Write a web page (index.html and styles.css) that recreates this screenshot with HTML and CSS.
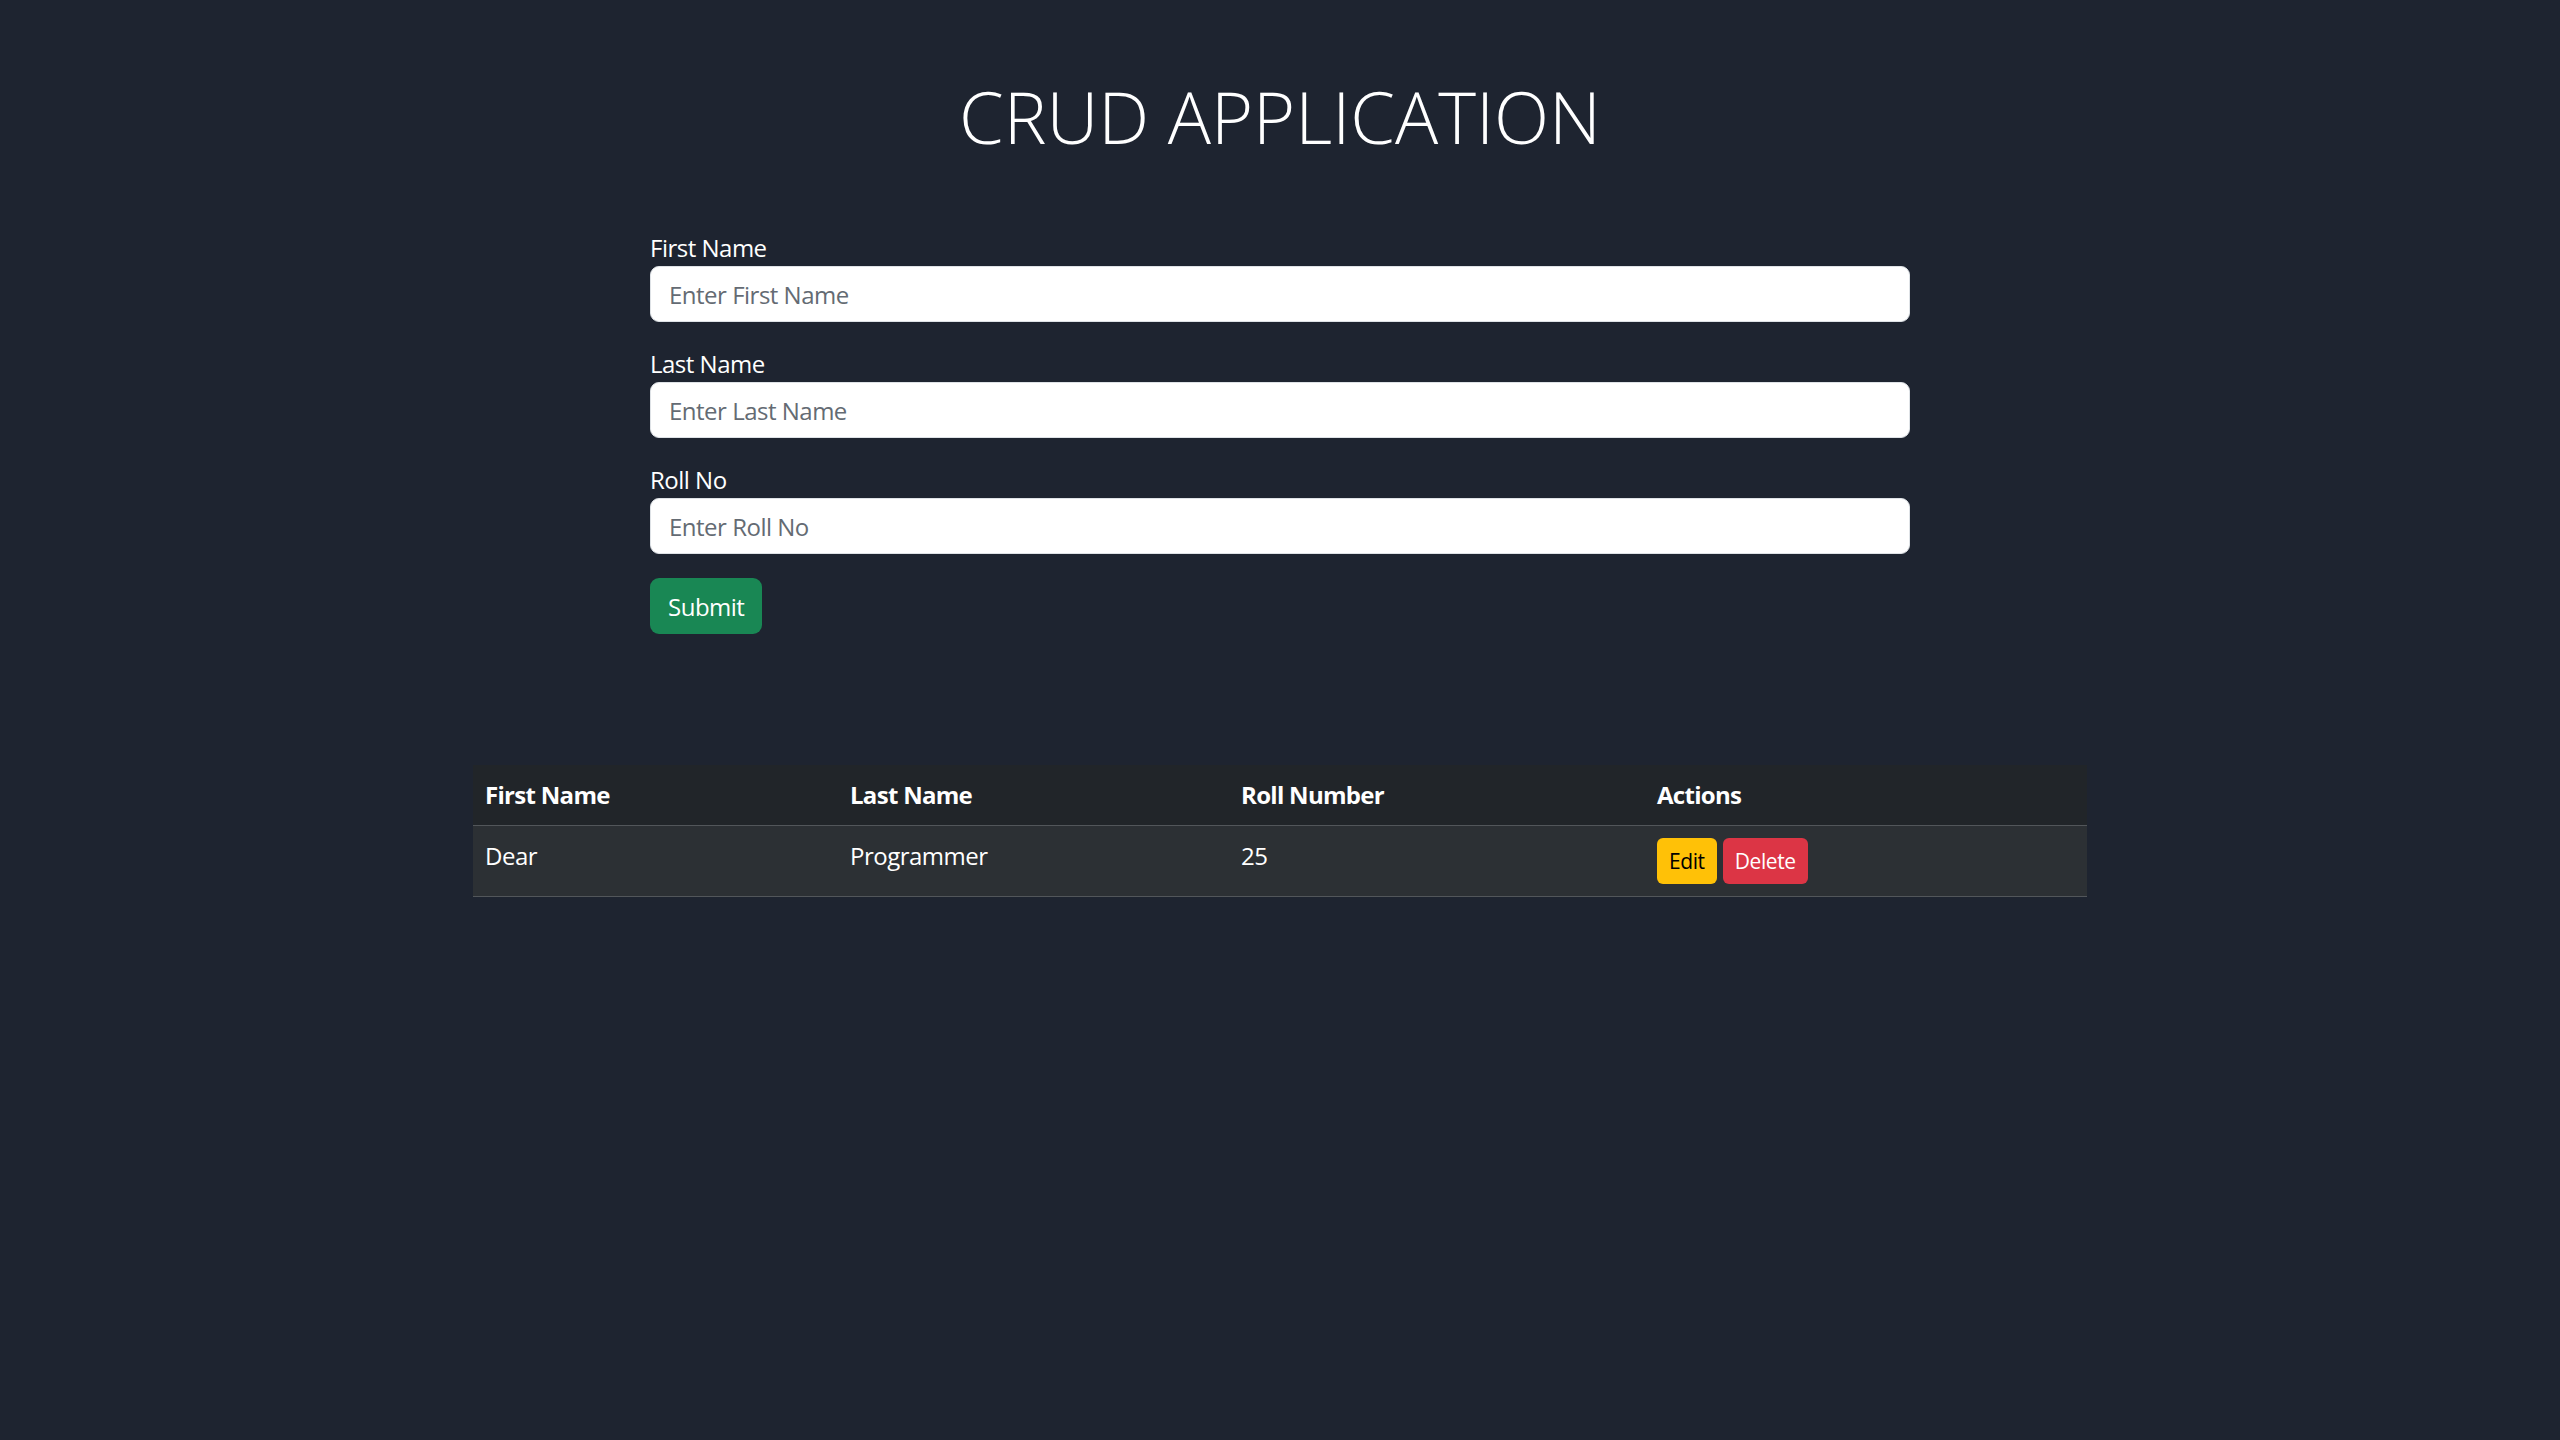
FILE: index.html
```html
<!DOCTYPE html>
<html lang="en">
<head>
  <meta charset="UTF-8">
  <meta name="viewport" content="width=device-width, initial-scale=1.0">
  <title>CRUD Application</title>
  <link rel="stylesheet" href="styles.css">
</head>
<body>
  <h1 class="titulo">CRUD APPLICATION</h1>

  <form id="form-aluno" class="form-aluno">
    <div class="campo">
      <label for="firstName">First Name</label>
      <input type="text" id="firstName" name="firstName" placeholder="Enter First Name">
    </div>
    <div class="campo">
      <label for="lastName">Last Name</label>
      <input type="text" id="lastName" name="lastName" placeholder="Enter Last Name">
    </div>
    <div class="campo">
      <label for="rollNo">Roll No</label>
      <input type="text" id="rollNo" name="rollNo" placeholder="Enter Roll No">
    </div>
    <button type="submit" class="btn btn-enviar">Submit</button>
  </form>

  <div class="lista">
    <table class="tabela">
      <thead>
        <tr>
          <th class="col-nome">First Name</th>
          <th class="col-sobrenome">Last Name</th>
          <th class="col-roll">Roll Number</th>
          <th>Actions</th>
        </tr>
      </thead>
      <tbody id="lista-alunos">
        <tr>
          <td>Dear</td>
          <td>Programmer</td>
          <td>25</td>
          <td>
            <div class="acoes">
              <button type="button" class="btn-sm btn-editar">Edit</button>
              <button type="button" class="btn-sm btn-excluir">Delete</button>
            </div>
          </td>
        </tr>
      </tbody>
    </table>
  </div>
</body>
</html>
```

FILE: styles.css
```css
body {
  margin: 0;
  background-color: #1e2430;
  color: #fff;
  font-family: "Open Sans", "Noto Sans", Arial, sans-serif;
  font-size: 24px;
  line-height: 36px;
  letter-spacing: -0.5px;
}

.titulo {
  margin: 72px 0;
  padding-top: 2px;
  font-size: 72px;
  font-weight: 300;
  line-height: 84px;
  letter-spacing: 0;
  text-align: center;
}

/* formulario */
.form-aluno {
  width: 1260px;
  margin: 0 auto;
}

.campo {
  margin-bottom: 24px;
}

.campo label {
  display: block;
}

.campo input {
  display: block;
  width: 100%;
  height: 56px;
  padding: 0 18px;
  box-sizing: border-box;
  border: 1px solid #dee2e6;
  border-radius: 9px;
  background: #fff;
  color: #212529;
  font-family: inherit;
  font-size: 24px;
  letter-spacing: -0.5px;
}

.campo input::placeholder {
  color: #646b73;
}

.btn {
  height: 56px;
  padding: 0 18px;
  border: none;
  border-radius: 9px;
  font-family: inherit;
  font-size: 24px;
  letter-spacing: -0.5px;
  cursor: pointer;
}

.btn-enviar {
  background-color: #198754;
  color: #fff;
}

/* tabela */
.lista {
  margin-top: 131px;
}

.tabela {
  width: 1614px;
  margin: 0 auto;
  border-collapse: collapse;
  text-align: left;
}

.tabela th,
.tabela td {
  padding: 12px;
  vertical-align: top;
  border-bottom: 1px solid #52565a;
}

.tabela th {
  background-color: #212529;
  font-weight: 700;
  letter-spacing: -0.7px;
}

.tabela td {
  background-color: #2c3034;
}

.col-nome { width: 341px; }
.col-sobrenome { width: 367px; }
.col-roll { width: 392px; }

.acoes {
  display: flex;
  gap: 6px;
}

.btn-sm {
  height: 46px;
  padding: 0 12px;
  border: none;
  border-radius: 6px;
  font-family: inherit;
  font-size: 21px;
  letter-spacing: -0.4px;
  cursor: pointer;
}

.btn-editar {
  background-color: #ffc107;
  color: #000;
}

.btn-excluir {
  background-color: #dc3545;
  color: #fff;
}
```
